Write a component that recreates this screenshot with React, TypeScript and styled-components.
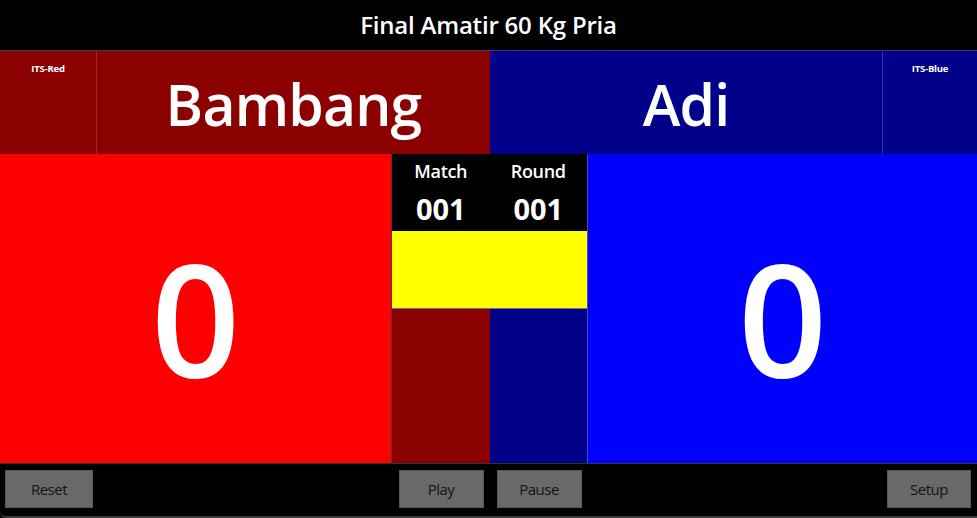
import React from "react";
import styled, { createGlobalStyle } from "styled-components";

const Global = createGlobalStyle`
  html, body { margin: 0; padding: 0; background: #000; }
  body { font-family: "Open Sans", "Noto Sans", sans-serif; }
  * { box-sizing: border-box; }
`;

const Page = styled.div`
  width: 977px;
  height: 518px;
  display: flex;
  flex-direction: column;
  background: #000;
  overflow: hidden;
`;

const TitleBar = styled.div`
  height: 51px;
  display: flex;
  align-items: center;
  justify-content: center;
  color: #fff;
  font-size: 24px;
  font-weight: 600;
  letter-spacing: -0.2px;
  padding-bottom: 1px;
  border-bottom: 1px solid #3c3c5c;
`;

const NameRow = styled.div`
  height: 103px;
  display: grid;
  grid-template-columns: 97px 393px 392px 95px;
`;

const TagCell = styled.div<{ $side: "red" | "blue" }>`
  background: ${(p) => (p.$side === "red" ? "#8b0000" : "#00008b")};
  ${(p) =>
    p.$side === "red"
      ? "border-right: 1px solid #a3282a;"
      : "border-left: 1px solid #2f2fa6;"}
  color: #fff;
  font-size: 9.5px;
  font-weight: 700;
  text-align: center;
  padding-top: 11px;
  letter-spacing: -0.2px;
`;

const NameCell = styled.div<{ $side: "red" | "blue" }>`
  background: ${(p) => (p.$side === "red" ? "#8b0000" : "#00008b")};
  color: #fff;
  display: flex;
  align-items: center;
  justify-content: center;
  font-size: 57px;
  font-weight: 600;
  letter-spacing: -0.8px;
  padding-top: 2px;
`;

const MainRow = styled.div`
  height: 309px;
  display: grid;
  grid-template-columns: 391px 197px 389px;
`;

const ScoreCell = styled.div<{ $side: "red" | "blue" }>`
  background: ${(p) => (p.$side === "red" ? "#ff0000" : "#0000ff")};
  color: #fff;
  display: flex;
  align-items: center;
  justify-content: center;
  font-size: 156px;
  font-weight: 600;
  padding-top: 16px;
`;

const Center = styled.div`
  display: grid;
  grid-template-rows: 77px 78px 1fr;
  border-left: 1px solid #5a3030;
  border-right: 1px solid #4a4ac0;
`;

const InfoBox = styled.div`
  background: #000;
  display: grid;
  grid-template-columns: 1fr 1fr;
  color: #fff;
`;

const InfoCol = styled.div`
  display: flex;
  flex-direction: column;
  align-items: center;
  padding-top: 5px;
`;

const InfoLabel = styled.div`
  font-size: 18px;
  font-weight: 600;
  letter-spacing: -0.3px;
  line-height: 24px;
`;

const InfoValue = styled.div`
  font-size: 29px;
  font-weight: 700;
  line-height: 36px;
  margin-top: 8px;
`;

const Timer = styled.div`
  background: #ffff00;
  border-bottom: 1px solid #777;
`;

const Split = styled.div`
  display: grid;
  grid-template-columns: 98px 1fr;
`;

const Half = styled.div<{ $side: "red" | "blue" }>`
  background: ${(p) => (p.$side === "red" ? "#8b0000" : "#00008b")};
`;

const BottomBar = styled.div`
  flex: 1;
  display: flex;
  align-items: flex-start;
  padding: 6px 6px 0 5px;
  border-top: 1px solid #333;
  border-bottom: 2px solid #3a3a3a;
  border-bottom-left-radius: 6px;
`;

const Spacer = styled.div`
  flex: 1;
`;

const CenterButtons = styled.div`
  display: flex;
  gap: 13px;
`;

const Button = styled.button<{ $w: number }>`
  width: ${(p) => p.$w}px;
  height: 38px;
  background: #696969;
  border: 1px solid #585858;
  color: #141414;
  font-family: "Open Sans", "Noto Sans", sans-serif;
  font-size: 15px;
  letter-spacing: -0.5px;
  padding: 0;
  cursor: pointer;
`;

export default function App() {
  return (
    <Page>
      <Global />
      <TitleBar>Final Amatir 60 Kg Pria</TitleBar>
      <NameRow>
        <TagCell $side="red">ITS-Red</TagCell>
        <NameCell $side="red">Bambang</NameCell>
        <NameCell $side="blue">Adi</NameCell>
        <TagCell $side="blue">ITS-Blue</TagCell>
      </NameRow>
      <MainRow>
        <ScoreCell $side="red">0</ScoreCell>
        <Center>
          <InfoBox>
            <InfoCol>
              <InfoLabel>Match</InfoLabel>
              <InfoValue>001</InfoValue>
            </InfoCol>
            <InfoCol>
              <InfoLabel>Round</InfoLabel>
              <InfoValue>001</InfoValue>
            </InfoCol>
          </InfoBox>
          <Timer />
          <Split>
            <Half $side="red" />
            <Half $side="blue" />
          </Split>
        </Center>
        <ScoreCell $side="blue">0</ScoreCell>
      </MainRow>
      <BottomBar>
        <Button $w={88}>Reset</Button>
        <Spacer />
        <CenterButtons>
          <Button $w={85}>Play</Button>
          <Button $w={85}>Pause</Button>
        </CenterButtons>
        <Spacer />
        <Button $w={84}>Setup</Button>
      </BottomBar>
    </Page>
  );
}
